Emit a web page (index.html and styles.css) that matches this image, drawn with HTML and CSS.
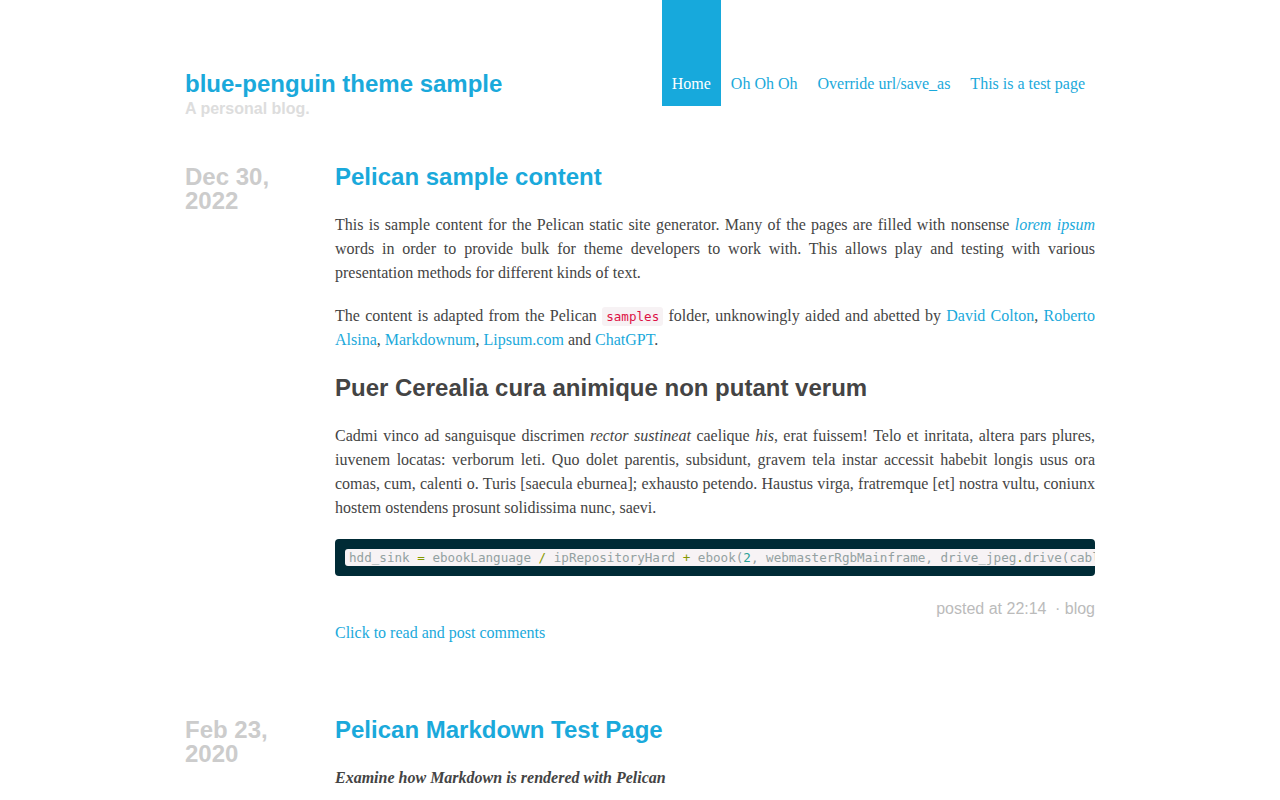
FILE: index.html
```html
<!DOCTYPE html>
<html lang="en">
<head>
<meta charset="utf-8">
<title>blue-penguin theme sample</title>
<link rel="stylesheet" href="styles.css">
</head>
<body>
<div class="wrap">
  <header class="site-header">
    <div class="brand">
      <a class="site-title" href="#">blue-penguin theme sample</a>
      <div class="site-sub">A personal blog.</div>
    </div>
    <nav class="nav">
      <a class="active" href="#">Home</a>
      <a href="#">Oh Oh Oh</a>
      <a href="#">Override url/save_as</a>
      <a href="#">This is a test page</a>
    </nav>
  </header>

  <main>
    <article class="entry">
      <div class="date">Dec 30,<br>2022</div>
      <div class="body">
        <h1 class="title"><a href="#">Pelican sample content</a></h1>
        <p>This is sample content for the Pelican static site generator. Many of the pages are filled with nonsense <a href="#"><em>lorem ipsum</em></a> words in order to provide bulk for theme developers to work with. This allows play and testing with various presentation methods for different kinds of text.</p>
        <p>The content is adapted from the Pelican <code class="inline">samples</code> folder, unknowingly aided and abetted by <a href="#">David Colton</a>, <a href="#">Roberto Alsina</a>, <a href="#">Markdownum</a>, <a href="#">Lipsum.com</a> and <a href="#">ChatGPT</a>.</p>
        <h2>Puer Cerealia cura animique non putant verum</h2>
        <p>Cadmi vinco ad sanguisque discrimen <em>rector sustineat</em> caelique <em>his</em>, erat fuissem! Telo et inritata, altera pars plures, iuvenem locatas: verborum leti. Quo dolet parentis, subsidunt, gravem tela instar accessit habebit longis usus ora comas, cum, calenti o. Turis [saecula eburnea]; exhausto petendo. Haustus virga, fratremque [et] nostra vultu, coniunx hostem ostendens prosunt solidissima nunc, saevi.</p>
        <pre class="codeblock"><code>hdd_sink <span class="op">=</span> ebookLanguage <span class="op">/</span> ipRepositoryHard <span class="op">+</span> ebook(<span class="num">2</span>, webmasterRgbMainframe, drive_jpeg<span class="op">.</span>drive(cable_ppp, ssd_dual_cdma), cardKbpsDesktop);</code></pre>
        <div class="meta">posted at 22:14 <span class="cat">&middot; <a href="#">blog</a></span></div>
        <a class="comments" href="#">Click to read and post comments</a>
      </div>
    </article>

    <article class="entry">
      <div class="date">Feb 23,<br>2020</div>
      <div class="body">
        <h1 class="title"><a href="#">Pelican Markdown Test Page</a></h1>
        <p><strong><em>Examine how Markdown is rendered with Pelican</em></strong></p>
      </div>
    </article>
  </main>
</div>
</body>
</html>
```

FILE: styles.css
```css
html, body {
  margin: 0;
  padding: 0;
}

body {
  background: #fff;
  color: #444;
  font-family: "Liberation Serif", "Times New Roman", serif;
  font-size: 16px;
  line-height: 24px;
}

a {
  color: #1aa9db;
  text-decoration: none;
}

.wrap {
  width: 910px;
  margin: 0 auto;
}

.site-header {
  display: flex;
  justify-content: space-between;
  align-items: flex-start;
}

.brand {
  padding-top: 72px;
  font-family: "Liberation Sans", Arial, sans-serif;
  font-weight: bold;
}

.site-title {
  display: block;
  font-size: 24px;
  line-height: 24px;
}

.site-sub {
  margin-top: 1px;
  color: #ddd;
  font-size: 16px;
  line-height: 24px;
}

.nav {
  display: flex;
}

.nav a {
  display: block;
  padding: 72px 10px 10px;
  line-height: 24px;
}

.nav a.active {
  background: #17a9dc;
  color: #fff;
}

main {
  padding-top: 43px;
}

.entry {
  display: flex;
  margin-bottom: 72px;
}

.date {
  flex: 0 0 150px;
  padding-top: 1px;
  font-family: "Liberation Sans", Arial, sans-serif;
  font-weight: bold;
  font-size: 24px;
  line-height: 24px;
  color: #ccc;
}

.body {
  flex: 1;
  min-width: 0;
}

.title {
  margin: 1px 0 24px;
  font-family: "Liberation Sans", Arial, sans-serif;
  font-size: 24px;
  line-height: 24px;
  font-weight: bold;
}

h2 {
  margin: 24px 0;
  font-family: "Liberation Sans", Arial, sans-serif;
  font-size: 24px;
  line-height: 24px;
  font-weight: bold;
  color: #444;
}

p {
  margin: 0 0 19px;
  text-align: justify;
}

code.inline {
  font-family: "DejaVu Sans Mono", "Liberation Mono", monospace;
  font-size: 12.6px;
  line-height: 16px;
  color: #dd1144;
  background: #f7f2f4;
  padding: 2px 4px;
  border-radius: 3px;
}

.codeblock {
  margin: 0 0 19px;
  padding: 10px;
  background: #002b36;
  border-radius: 4px;
  overflow: hidden;
  white-space: pre;
  font-family: "DejaVu Sans Mono", "Liberation Mono", monospace;
  font-size: 12.6px;
  line-height: 17px;
}

.codeblock code {
  font-family: inherit;
  display: inline-block;
  padding: 0 4px;
  background: #f7f3f5;
  color: #93a1a1;
  border-radius: 3px;
}

.codeblock .op {
  color: #859900;
}

.codeblock .num {
  color: #2aa198;
}

.meta {
  margin-top: 21px;
  text-align: right;
  font-family: "Liberation Sans", Arial, sans-serif;
  color: #bbb;
}

.meta .cat {
  margin-left: 4px;
}

.meta a {
  color: #bbb;
}

.comments {
  display: block;
}
```
